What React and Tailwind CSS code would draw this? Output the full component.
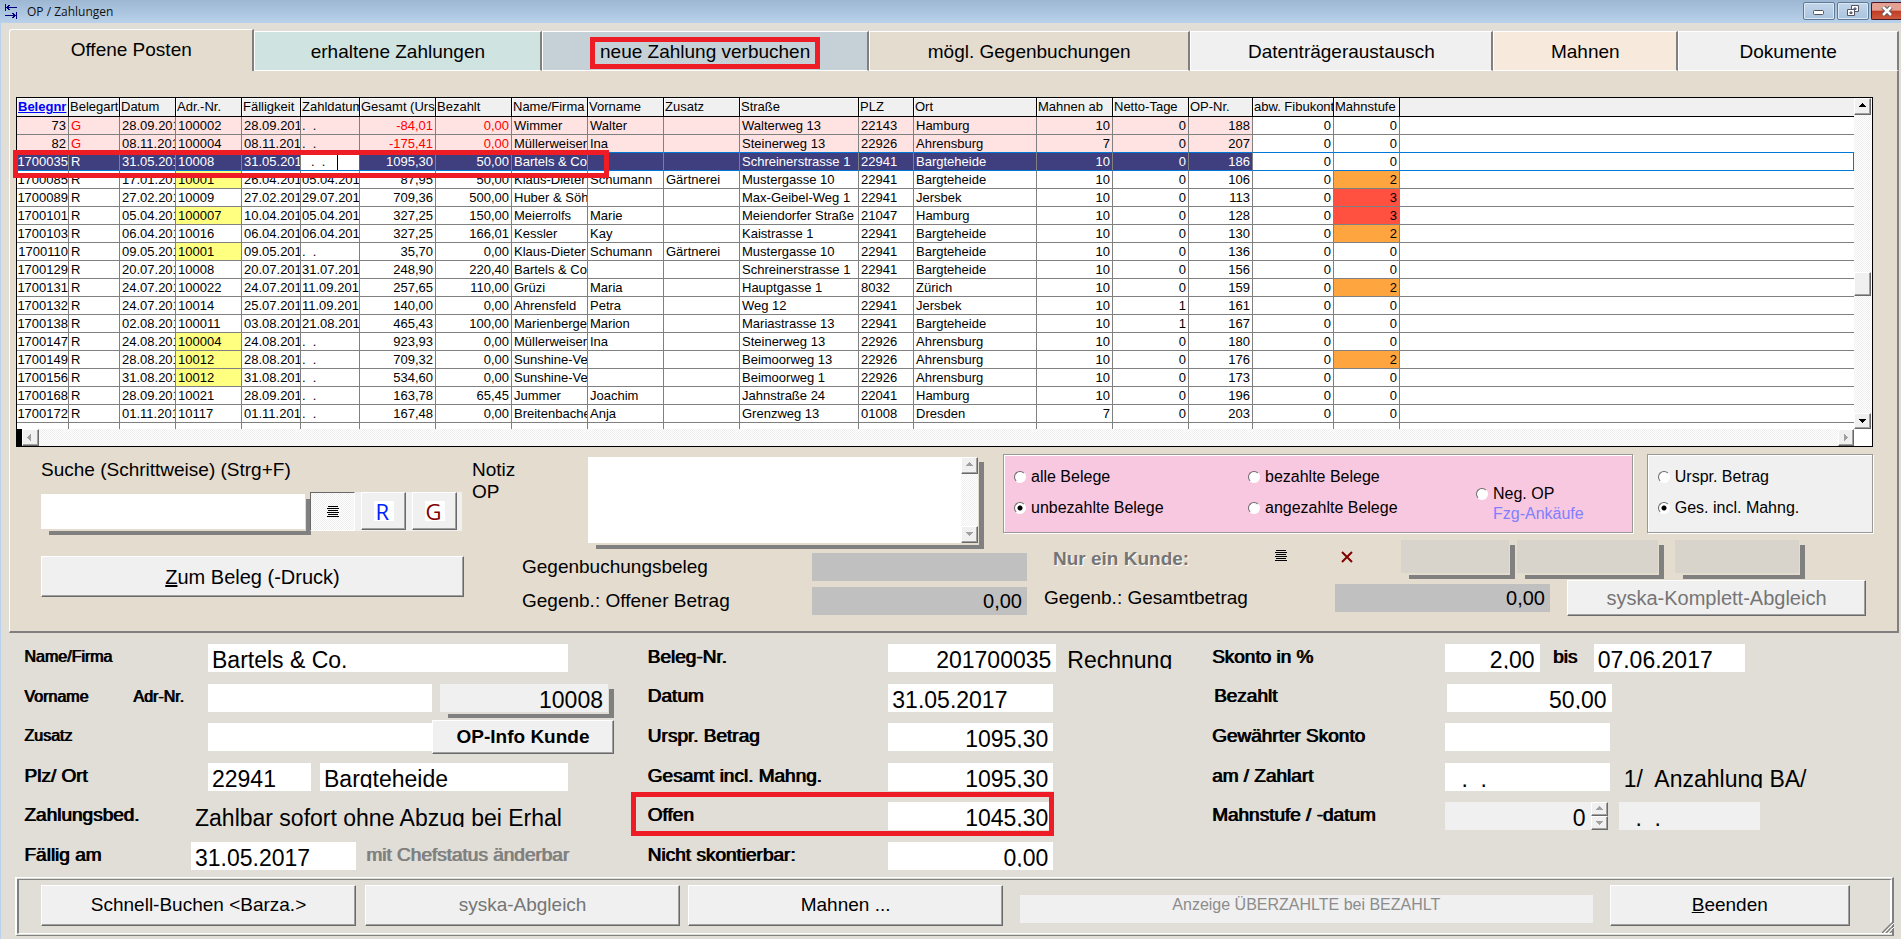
import { useState } from 'react'
import clsx from 'clsx'

const SPALTEN = [
  { key: 'nr',     titel: 'Belegnr',        w: 'w-[52px]',  rechts: true },
  { key: 'art',    titel: 'Belegart',       w: 'w-[51px]' },
  { key: 'datum',  titel: 'Datum',          w: 'w-[56px]' },
  { key: 'adr',    titel: 'Adr.-Nr.',       w: 'w-[66px]' },
  { key: 'faellig', titel: 'Fälligkeit',    w: 'w-[59px]' },
  { key: 'zahl',   titel: 'Zahldatum',      w: 'w-[59px]' },
  { key: 'gesamt', titel: 'Gesamt (Urspr.)', w: 'w-[76px]', rechts: true },
  { key: 'bez',    titel: 'Bezahlt',        w: 'w-[76px]',  rechts: true },
  { key: 'name',   titel: 'Name/Firma',     w: 'w-[76px]' },
  { key: 'vor',    titel: 'Vorname',        w: 'w-[76px]' },
  { key: 'zusatz', titel: 'Zusatz',         w: 'w-[76px]' },
  { key: 'str',    titel: 'Straße',         w: 'w-[119px]' },
  { key: 'plz',    titel: 'PLZ',            w: 'w-[55px]' },
  { key: 'ort',    titel: 'Ort',            w: 'w-[123px]' },
  { key: 'mahnAb', titel: 'Mahnen ab',      w: 'w-[76px]',  rechts: true },
  { key: 'netto',  titel: 'Netto-Tage',     w: 'w-[76px]',  rechts: true },
  { key: 'op',     titel: 'OP-Nr.',         w: 'w-[64px]',  rechts: true },
  { key: 'fibu',   titel: 'abw. Fibukonto', w: 'w-[81px]',  rechts: true },
  { key: 'stufe',  titel: 'Mahnstufe',      w: 'w-[66px]',  rechts: true },
]

const KEYS = SPALTEN.map(s => s.key)
const LEER = '.  .'

const POSTEN = [
  ['73', 'G', '28.09.2017', '100002', '28.09.2017', LEER, '-84,01', '0,00', 'Wimmer', 'Walter', '', 'Walterweg 13', '22143', 'Hamburg', '10', '0', '188', '0', '0'],
  ['82', 'G', '08.11.2017', '100004', '08.11.2017', LEER, '-175,41', '0,00', 'Müllerweiser', 'Ina', '', 'Steinerweg 13', '22926', 'Ahrensburg', '7', '0', '207', '0', '0'],
  ['1700035', 'R', '31.05.2017', '10008', '31.05.2017', LEER, '1095,30', '50,00', 'Bartels & Co.', '', '', 'Schreinerstrasse 1', '22941', 'Bargteheide', '10', '0', '186', '0', '0'],
  ['1700085', 'R', '17.01.2017', '10001', '26.04.2017', '05.04.2017', '87,95', '50,00', 'Klaus-Dieter', 'Schumann', 'Gärtnerei', 'Mustergasse 10', '22941', 'Bargteheide', '10', '0', '106', '0', '2'],
  ['1700089', 'R', '27.02.2017', '10009', '27.02.2017', '29.07.2017', '709,36', '500,00', 'Huber & Söhne', '', '', 'Max-Geibel-Weg 1', '22941', 'Jersbek', '10', '0', '113', '0', '3'],
  ['1700101', 'R', '05.04.2017', '100007', '10.04.2017', '05.04.2017', '327,25', '150,00', 'Meierrolfs', 'Marie', '', 'Meiendorfer Straße', '21047', 'Hamburg', '10', '0', '128', '0', '3'],
  ['1700103', 'R', '06.04.2017', '10016', '06.04.2017', '06.04.2017', '327,25', '166,01', 'Kessler', 'Kay', '', 'Kaistrasse 1', '22941', 'Bargteheide', '10', '0', '130', '0', '2'],
  ['1700110', 'R', '09.05.2017', '10001', '09.05.2017', LEER, '35,70', '0,00', 'Klaus-Dieter', 'Schumann', 'Gärtnerei', 'Mustergasse 10', '22941', 'Bargteheide', '10', '0', '136', '0', '0'],
  ['1700129', 'R', '20.07.2017', '10008', '20.07.2017', '31.07.2017', '248,90', '220,40', 'Bartels & Co.', '', '', 'Schreinerstrasse 1', '22941', 'Bargteheide', '10', '0', '156', '0', '0'],
  ['1700131', 'R', '24.07.2017', '100022', '24.07.2017', '11.09.2017', '257,65', '110,00', 'Grüzi', 'Maria', '', 'Hauptgasse 1', '8032', 'Zürich', '10', '0', '159', '0', '2'],
  ['1700132', 'R', '24.07.2017', '10014', '25.07.2017', '11.09.2017', '140,00', '0,00', 'Ahrensfeld', 'Petra', '', 'Weg 12', '22941', 'Jersbek', '10', '1', '161', '0', '0'],
  ['1700138', 'R', '02.08.2017', '100011', '03.08.2017', '21.08.2017', '465,43', '100,00', 'Marienberger', 'Marion', '', 'Mariastrasse 13', '22941', 'Bargteheide', '10', '1', '167', '0', '0'],
  ['1700147', 'R', '24.08.2017', '100004', '24.08.2017', LEER, '923,93', '0,00', 'Müllerweiser', 'Ina', '', 'Steinerweg 13', '22926', 'Ahrensburg', '10', '0', '180', '0', '0'],
  ['1700149', 'R', '28.08.2017', '10012', '28.08.2017', LEER, '709,32', '0,00', 'Sunshine-Verleih', '', '', 'Beimoorweg 13', '22926', 'Ahrensburg', '10', '0', '176', '0', '2'],
  ['1700156', 'R', '31.08.2017', '10012', '31.08.2017', LEER, '534,60', '0,00', 'Sunshine-Verleih', '', '', 'Beimoorweg 1', '22926', 'Ahrensburg', '10', '0', '173', '0', '0'],
  ['1700168', 'R', '28.09.2017', '10021', '28.09.2017', LEER, '163,78', '65,45', 'Jummer', 'Joachim', '', 'Jahnstraße 24', '22041', 'Hamburg', '10', '0', '196', '0', '0'],
  ['1700172', 'R', '01.11.2017', '10117', '01.11.2017', LEER, '167,48', '0,00', 'Breitenbacher', 'Anja', '', 'Grenzweg 13', '01008', 'Dresden', '7', '0', '203', '0', '0'],
].map(z => Object.fromEntries(z.map((v, i) => [KEYS[i], v])))

const GELB = ['1700085', '1700101', '1700110', '1700147', '1700149', '1700156']
const AKTIV = '1700035'

const RASTER = '[background-image:repeating-conic-gradient(#fff_0_25%,#efefef_0_50%)] [background-size:2px_2px]'
const ERHABEN = 'bg-[#f0f0f0] border border-t-white border-l-white border-r-[#696969] border-b-[#696969] shadow-[inset_-1px_-1px_0_#a0a0a0]'

/* ---------- kleine Bausteine ---------- */

function Knopf({ className, children, ...rest }) {
  return (
    <button type="button" className={clsx(ERHABEN, 'whitespace-nowrap text-center', className)} {...rest}>
      {children}
    </button>
  )
}

function Pfeil({ richtung, grau }) {
  const d = {
    hoch:   'M4 0h1v1h1v1h1v1h1v1H1V3h1V2h1V1h1z',
    runter: 'M1 1h7v1H7v1H6v1H5v1H4V4H3V3H2V2H1z',
    links:  'M5 0v7H4V6H3V5H2V4H1V3h1V2h1V1h1V0z',
    rechts: 'M2 0h1v1h1v1h1v1h1v1H5v1H4v1H3v1H2z',
  }[richtung]
  return (
    <svg width="9" height="7" viewBox="0 0 9 7" className={grau ? 'fill-[#a0a0a0]' : 'fill-black'} aria-hidden="true">
      <path d={d} />
    </svg>
  )
}

function RollKnopf({ richtung, grau, className, name }) {
  return (
    <button type="button" aria-label={name} className={clsx(ERHABEN, 'flex shrink-0 items-center justify-center', className)}>
      <Pfeil richtung={richtung} grau={grau} />
    </button>
  )
}

// Feld mit versetztem grauem Schlagschatten
function Schatten({ className, children }) {
  return (
    <div className={clsx('grid shrink-0', className)}>
      <div className="[grid-area:1/1] mt-[5px] ml-2 border-r-[5px] border-b-4 border-[#808080]" />
      <div className="[grid-area:1/1] mr-[6px] mb-[6px] flex">{children}</div>
    </div>
  )
}

function Wert({ id, value, rechts, bg = 'bg-white', className }) {
  return (
    <div className={clsx('h-7 shrink-0 overflow-hidden pt-1 pb-[3px]', bg, className)}>
      <div className="h-[21px] overflow-hidden">
        <input
          id={id} defaultValue={value} aria-label={id}
          className={clsx('block h-[25px] w-full bg-transparent text-[23px] leading-[25px] outline-none', rechts ? 'pr-[5px] text-right' : 'pl-1')}
        />
      </div>
    </div>
  )
}

function Label({ id, className, klein, children }) {
  return (
    <label
      htmlFor={id}
      className={clsx('shrink-0 whitespace-nowrap pb-[2px] [text-shadow:1px_0_0_currentColor]', klein ? 'text-[16px]' : 'text-[19px]', className)}
    >
      {children}
    </label>
  )
}

function Zeile({ className, children }) {
  return <div className={clsx('flex h-7 items-center', className)}>{children}</div>
}

function Option({ gruppe, label, wert, onChange, className }) {
  return (
    <label className={clsx('flex items-center gap-[5px] text-[16px] leading-5 whitespace-nowrap', className)}>
      <input
        type="radio" name={gruppe} checked={wert === label} onChange={() => onChange(label)}
        className="h-3 w-3 shrink-0 appearance-none rounded-full border border-t-[#696969] border-r-white border-b-white border-l-[#696969] bg-white checked:[background-image:radial-gradient(circle,#000_2px,#fff_3px)]"
      />
      {label}
    </label>
  )
}

function ListenIcon() {
  return (
    <svg width="12" height="12" viewBox="0 0 12 12" aria-hidden="true">
      <path d="M1 .5h10M0 2.5h12M1 4.5h10M0 6.5h12M1 8.5h10M0 10.5h12" stroke="#000" strokeWidth="1" shapeRendering="crispEdges" />
    </svg>
  )
}

function Markierung({ className }) {
  return <div className={clsx('pointer-events-none absolute border-[5px] border-[#ee1c24]', className)} />
}

/* ---------- Titelleiste ---------- */

function Titelleiste() {
  const knopf = 'flex h-[18px] w-8 items-center justify-center rounded-[2px] border border-[#5f7894] shadow-[inset_0_0_0_1px_#dbe8f5]'
  return (
    <header className="flex h-[23px] shrink-0 items-center bg-linear-to-b from-[#9db7d3] to-[#b9d1ea] pl-[5px]">
      <svg width="13" height="15" viewBox="0 0 13 15" aria-hidden="true" fill="none" stroke="#00007f" shapeRendering="crispEdges">
        <path d="M.5 0v7M1 3.500h11M2.500 2v3M3.500 1v5M4.500 1v1M4.500 5v1" />
        <path d="M11.500 8v7M0 11.500h11M9.500 10v3M8.500 9v5M7.500 9v1M7.500 13v1" />
      </svg>
      <h1 className="ml-[9px] font-['Open_Sans',sans-serif] text-[12px] text-[#111]">OP / Zahlungen</h1>
      <div className="ml-auto flex h-full gap-[2px] pt-[2px]">
        <button type="button" aria-label="Minimieren" className={clsx(knopf, 'bg-linear-to-b from-[#c3d6ea] to-[#a9c3de]')}>
          <svg width="12" height="6" viewBox="0 0 12 6" className="mt-[3px]"><rect x=".5" y=".5" width="10" height="4" rx="1" fill="#fff" stroke="#555" /></svg>
        </button>
        <button type="button" aria-label="Wiederherstellen" className={clsx(knopf, 'bg-linear-to-b from-[#c3d6ea] to-[#a9c3de]')}>
          <svg width="13" height="12" viewBox="0 0 13 12" fill="#fff" stroke="#556">
            <path d="M4.500 .5h7v6h-7z" />
            <path d="M7 3h2v1.500H7z" fill="#9db7d3" />
            <path d="M.5 4.500h7v6h-7z" />
            <path d="M3 7h2v1.500H3z" fill="#9db7d3" />
          </svg>
        </button>
        <button type="button" aria-label="Schließen" className="flex h-[18px] w-[30px] items-center justify-center rounded-l-[2px] border border-r-0 border-[#4a1420] bg-linear-to-b from-[#e5a094] from-45% via-[#c03a24] via-50% to-[#cc5a3c]">
          <svg width="12" height="10" viewBox="0 0 12 10">
            <path d="M2 1l8 8M10 1L2 9" stroke="#555" strokeWidth="4.500" />
            <path d="M2 1l8 8M10 1L2 9" stroke="#fff" strokeWidth="2.500" />
          </svg>
        </button>
      </div>
    </header>
  )
}

/* ---------- Register ---------- */

const REGISTER = [
  { titel: 'erhaltene Zahlungen',    cls: 'flex-[288] bg-[#cfe3e1]' },
  { titel: 'neue Zahlung verbuchen', cls: 'flex-[327] bg-[#c6d1d7]', rot: true },
  { titel: 'mögl. Gegenbuchungen',   cls: 'flex-[322] bg-[#e3dccf]' },
  { titel: 'Datenträgeraustausch',   cls: 'flex-[303] bg-[#f0f0f0]' },
  { titel: 'Mahnen',                 cls: 'flex-[184] bg-[#f7eadd]' },
  { titel: 'Dokumente',              cls: 'flex-[220] bg-[#f0f0f0]' },
]

function Register() {
  return (
    <nav className="flex h-[42px] text-[19px]" role="tablist">
      <button type="button" role="tab" aria-selected="true"
        className="flex-[245] rounded-tl-[3px] border-t border-r-2 border-l border-t-white border-r-[#808080] border-l-white bg-[#e3dccf]">
        Offene Posten
      </button>
      {REGISTER.map(r => (
        <button key={r.titel} type="button" role="tab" aria-selected="false"
          className={clsx('relative mt-[2px] border-t border-r-2 border-b border-l border-t-white border-r-[#808080] border-b-white border-l-white pt-[3px]', r.cls)}>
          {r.titel}
          {r.rot && <Markierung className="inset-x-[47px] top-[5px] h-8" />}
        </button>
      ))}
    </nav>
  )
}

/* ---------- Tabelle ---------- */

function zellKlasse(p, s, i) {
  const farbig = i < 17
  const aktiv = p.nr === AKTIV
  return clsx(
    'h-[18px] overflow-hidden border-r border-b border-r-[#808080] py-0 leading-[17px] whitespace-pre',
    aktiv || p.nr === '82' ? 'border-b-[#0078d7]' : 'border-b-[#808080]',
    s.key === 'nr' ? 'px-0' : s.key === 'zahl' ? 'pr-0 pl-px' : 'px-[2px]',
    s.rechts && 'text-right',
    p.nr === '73' || p.nr === '82' ? s.key === 'nr' && 'pr-[2px]' : '',
    farbig && p.art === 'G' && 'bg-[#ffe2e2]',
    farbig && aktiv && 'bg-[#3f3f7f] text-white',
    p.art === 'G' && ['art', 'gesamt', 'bez'].includes(s.key) && 'text-[#ff0000]',
    s.key === 'adr' && GELB.includes(p.nr) && 'bg-[#ffff80]',
    s.key === 'stufe' && p.stufe === '2' && 'bg-[#ffa540]',
    s.key === 'stufe' && p.stufe === '3' && 'bg-[#ff5040]',
  )
}

function Tabelle() {
  return (
    <div className="relative mr-6 ml-[6px] border border-black bg-white">
      <div className="flex">
        <div className="h-[331px] min-w-0 flex-1 overflow-hidden">
          <table className="w-full table-fixed border-separate border-spacing-0 text-[13px]">
            <thead>
              <tr>
                {SPALTEN.map(s => (
                  <th key={s.key}
                    className={clsx('h-[19px] overflow-hidden border-r border-b border-black bg-[#f0f0f0] p-0 pl-px text-left leading-[18px] whitespace-nowrap shadow-[inset_1px_1px_0_#fff]', s.w,
                      s.key === 'nr' ? 'font-bold text-[#0000ff] underline' : 'font-normal')}>
                    {s.titel}
                  </th>
                ))}
                <th className="border-b border-black bg-[#f0f0f0] p-0" />
              </tr>
            </thead>
            <tbody>
              {POSTEN.map(p => (
                <tr key={p.nr}>
                  {SPALTEN.map((s, i) => p.nr === AKTIV && s.key === 'zahl'
                    ? (
                      <td key={s.key} className="h-[18px] overflow-hidden border-r border-b border-[#0078d7] bg-white p-0">
                        <input aria-label="Zahldatum" defaultValue={LEER} className="block h-4 w-[37px] border-r border-black pl-[10px] text-[13px] leading-4 outline-none" />
                      </td>
                    )
                    : <td key={s.key} className={zellKlasse(p, s, i)}>{p[s.key]}</td>)}
                  <td className={clsx('border-b p-0', p.nr === AKTIV ? 'border-r border-[#0078d7]' : p.nr === '82' ? 'border-[#0078d7]' : 'border-[#808080]')} />
                </tr>
              ))}
              <tr>
                {SPALTEN.map(s => <td key={s.key} className="h-[18px] border-r border-[#808080] p-0" />)}
                <td className="p-0" />
              </tr>
            </tbody>
          </table>
        </div>
        <div className={clsx('mr-px flex w-[17px] flex-col', RASTER)}>
          <RollKnopf richtung="hoch" name="Nach oben" className="h-[17px]" />
          <div className="flex-[157]" />
          <div className={clsx('h-6', ERHABEN)} />
          <div className="flex-[117]" />
          <RollKnopf richtung="runter" name="Nach unten" className="h-4" />
        </div>
      </div>
      <div className="mr-[18px] flex h-[17px]">
        <div className="w-[5px] bg-black" />
        <RollKnopf richtung="links" grau name="Nach links" className="w-[17px]" />
        <div className={clsx('flex-1', RASTER)} />
        <RollKnopf richtung="rechts" grau name="Nach rechts" className="w-4" />
      </div>
      <Markierung className="top-[52px] -left-1 h-7 w-[596px]" />
    </div>
  )
}

/* ---------- Bereich unter der Tabelle ---------- */

function Suche() {
  return (
    <div className="w-[423px] shrink-0 pt-[5px]">
      <label htmlFor="suche" className="block text-[19px] leading-[22px]">Suche (Schrittweise) (Strg+F)</label>
      <div className="mt-[11px] flex items-start">
        <Schatten className="mt-[2px] h-[41px] w-[270px]">
          <input id="suche" className="w-full bg-white px-1 text-[19px] outline-none" />
        </Schatten>
        <div className="-ml-px flex h-[39px] w-[152px] gap-[6px] bg-[#f0f0f0]">
          <button type="button" aria-label="Liste" className={clsx('flex w-[45px] items-center justify-center border border-t-[#696969] border-r-white border-b-white border-l-[#696969]', RASTER)}>
            <ListenIcon />
          </button>
          <Knopf className="mb-px flex w-[45px] items-center justify-center">
            <span className="w-5 bg-white pl-[2px] text-left font-['Open_Sans',sans-serif] text-[22px] leading-5 text-[#0020ff]">R</span>
          </Knopf>
          <Knopf className="mb-px flex w-[45px] items-center justify-center">
            <span className="w-5 bg-white pl-px text-left font-['Open_Sans',sans-serif] text-[22px] leading-5 text-[#800000]">G</span>
          </Knopf>
        </div>
      </div>
      <Knopf className="mt-[21px] h-[41px] w-full text-[20px]"><u>Z</u>um Beleg (-Druck)</Knopf>
    </div>
  )
}

function Filter() {
  const [belege, setBelege] = useState('unbezahlte Belege')
  const [betrag, setBetrag] = useState('Ges. incl. Mahng.')
  const rahmen = 'h-[79px] border border-[#999] shadow-[inset_1px_1px_0_#fff,1px_1px_0_#fff]'
  return (
    <>
      <fieldset className={clsx('ml-[19px] flex flex-[617] bg-[#f8c8e0] pl-[10px]', rahmen)}>
        <div className="flex w-[234px] flex-col gap-[11px] pt-3">
          <Option gruppe="belege" label="alle Belege" wert={belege} onChange={setBelege} />
          <Option gruppe="belege" label="unbezahlte Belege" wert={belege} onChange={setBelege} />
        </div>
        <div className="flex w-[228px] flex-col gap-[11px] pt-3">
          <Option gruppe="belege" label="bezahlte Belege" wert={belege} onChange={setBelege} />
          <Option gruppe="belege" label="angezahlte Belege" wert={belege} onChange={setBelege} />
        </div>
        <div className="pt-[29px]">
          <Option gruppe="belege" label="Neg. OP" wert={belege} onChange={setBelege} />
          <p className="pl-[17px] text-[16px] leading-5 text-[#8080ff]">Fzg-Ankäufe</p>
        </div>
      </fieldset>
      <fieldset className={clsx('ml-[14px] flex flex-[214] flex-col gap-[11px] bg-[#f0f0f0] pt-3 pl-[10px]', rahmen)}>
        <Option gruppe="betrag" label="Urspr. Betrag" wert={betrag} onChange={setBetrag} />
        <Option gruppe="betrag" label="Ges. incl. Mahng." wert={betrag} onChange={setBetrag} />
      </fieldset>
    </>
  )
}

function Grau({ id, value = '' }) {
  return <input id={id} defaultValue={value} className="h-7 w-[215px] shrink-0 bg-[#c0c0c0] pr-[5px] text-right text-[20px] outline-none" />
}

function Gegenbuchung() {
  return (
    <div className="flex items-start pl-[50px] text-[19px]">
      <div className="mt-1 flex w-[505px] shrink-0 flex-col gap-[5px]">
        <div className="flex items-center justify-between"><label htmlFor="gb">Gegenbuchungsbeleg</label><Grau id="gb" /></div>
        <div className="flex items-center justify-between"><label htmlFor="gbo">Gegenb.: Offener Betrag</label><Grau id="gbo" value="0,00" /></div>
      </div>
      <div className="-mt-[9px] ml-[17px] min-w-0 flex-1">
        <div className="flex h-10 items-start">
          <span className="w-[222px] pt-[5px] pl-[9px] font-bold text-[#757575] [text-shadow:1px_1px_0_#fff]">Nur ein Kunde:</span>
          <button type="button" aria-label="Kundenliste" className="mt-[10px] ml-[9px]"><ListenIcon /></button>
          <button type="button" aria-label="Kunde entfernen" className="mt-[11px] ml-[54px]">
            <svg width="12" height="12" viewBox="0 0 12 12"><path d="M1 1l10 10M11 1L1 11" stroke="#800000" strokeWidth="2" /></svg>
          </button>
          <Schatten className="ml-12 h-[39px] w-[114px]"><input aria-label="Kunden-Nr." className="w-full bg-[#d8d4cc]" /></Schatten>
          <Schatten className="ml-[2px] h-[39px] w-[147px]"><input aria-label="Kunde Name" className="w-full bg-[#d8d4cc]" /></Schatten>
          <Schatten className="ml-[11px] h-[39px] w-[130px]"><input aria-label="Kunde Ort" className="w-full bg-[#d8d4cc]" /></Schatten>
        </div>
        <div className="flex h-9 items-center">
          <label htmlFor="gbg" className="w-[291px] shrink-0 whitespace-nowrap">Gegenb.: Gesamtbetrag</label>
          <Grau id="gbg" value="0,00" />
          <Knopf className="mr-[7px] ml-[17px] h-9 flex-1 text-[20px] text-[#757575]">syska-Komplett-Abgleich</Knopf>
        </div>
      </div>
    </div>
  )
}

function OffenePosten() {
  return (
    <section className="border-r-2 border-b-2 border-l border-r-[#808080] border-b-[#808080] border-l-white bg-[#e3dccf] pt-[26px] pb-[15px]">
      <Tabelle />
      <div className="mt-[7px] mr-6 flex pl-[31px]">
        <Suche />
        <div className="ml-2 min-w-0 flex-1">
          <div className="flex items-start">
            <label htmlFor="notiz" className="w-[116px] pt-[5px] text-[19px] leading-[22px]">Notiz<br />OP</label>
            <Schatten className="mt-[3px] h-[92px] w-[396px]">
              <textarea id="notiz" className="min-w-0 flex-1 resize-none bg-white outline-none" />
              <div className={clsx('flex w-[17px] flex-col justify-between', RASTER)}>
                <RollKnopf richtung="hoch" grau name="Notiz nach oben" className="h-[17px]" />
                <RollKnopf richtung="runter" grau name="Notiz nach unten" className="h-[17px]" />
              </div>
            </Schatten>
            <Filter />
          </div>
          <Gegenbuchung />
        </div>
      </div>
    </section>
  )
}

/* ---------- Detailformular ---------- */

function Formular() {
  return (
    <form className="grid flex-1 grid-cols-[623fr_564fr_689fr] pt-[11px] pb-[7px] pl-[23px]">
      <div className="flex flex-col justify-between">
        <Zeile><Label id="Name" klein className="w-[184px]">Name/Firma</Label><Wert id="Name" value="Bartels & Co." className="w-[360px]" /></Zeile>
        <Zeile className="items-start">
          <Label id="Vorname" klein className="w-[109px] leading-[26px]">Vorname</Label>
          <Label id="AdrNr" klein className="w-[75px] leading-[26px]">Adr-Nr.</Label>
          <Wert id="Vorname" value="" className="w-[224px]" />
          <Schatten className="ml-2 w-[174px]"><Wert id="AdrNr" value="10008" rechts bg="bg-[#f0f0f0]" className="w-full" /></Schatten>
        </Zeile>
        <Zeile>
          <Label id="Zusatz" klein className="w-[184px]">Zusatz</Label>
          <Wert id="Zusatz" value="" className="w-[224px]" />
          <Knopf className="h-[34px] w-[182px] shrink-0 text-[19px] font-bold">OP-Info Kunde</Knopf>
        </Zeile>
        <Zeile>
          <Label id="PLZ" className="w-[184px]">Plz/ Ort</Label>
          <Wert id="PLZ" value="22941" className="w-[103px]" />
          <Wert id="Ort" value="Bargteheide" className="ml-[9px] w-[248px]" />
        </Zeile>
        <Zeile><Label id="Zahlungsbed" className="w-[167px]">Zahlungsbed.</Label><Wert id="Zahlungsbed" value="Zahlbar sofort ohne Abzug bei Erhal" bg="" className="w-[376px]" /></Zeile>
        <Zeile>
          <Label id="Faellig" className="w-[167px]">Fällig am</Label>
          <Wert id="Faellig" value="31.05.2017" className="w-[165px]" />
          <Label className="ml-[10px] text-[#808080]">mit Chefstatus änderbar</Label>
        </Zeile>
      </div>

      <div className="flex flex-col justify-between">
        <Zeile>
          <Label id="BelegNr" className="w-[241px]">Beleg-Nr.</Label>
          <Wert id="BelegNr" value="201700035" rechts className="w-[168px]" />
          <Wert id="Belegart" value="Rechnung" bg="" className="ml-[7px] w-[114px]" />
        </Zeile>
        <Zeile><Label id="Datum" className="w-[241px]">Datum</Label><Wert id="Datum" value="31.05.2017" className="w-[165px]" /></Zeile>
        <Zeile><Label id="Betrag" className="w-[241px]">Urspr. Betrag</Label><Wert id="Betrag" value="1095,30" rechts className="w-[165px]" /></Zeile>
        <Zeile><Label id="Gesamt" className="w-[241px]">Gesamt incl. Mahng.</Label><Wert id="Gesamt" value="1095,30" rechts className="w-[165px]" /></Zeile>
        <Zeile className="relative">
          <Label id="Offen" className="w-[241px]">Offen</Label><Wert id="Offen" value="1045,30" rechts className="w-[165px]" />
          <Markierung className="-top-[10px] -left-4 h-11 w-[423px]" />
        </Zeile>
        <Zeile><Label id="NichtSk" className="w-[241px]">Nicht skontierbar:</Label><Wert id="NichtSk" value="0,00" rechts className="w-[165px]" /></Zeile>
      </div>

      <div className="flex flex-col justify-between">
        <Zeile>
          <Label id="Skonto" className="w-[233px]">Skonto in %</Label>
          <Wert id="Skonto" value="2,00" rechts className="w-[95px]" />
          <Label id="SkontoBis" className="ml-[13px] w-[41px]">bis</Label>
          <Wert id="SkontoBis" value="07.06.2017" className="w-[151px]" />
        </Zeile>
        <Zeile className="pl-[2px]"><Label id="Bezahlt" className="w-[233px]">Bezahlt</Label><Wert id="Bezahlt" value="50,00" rechts className="w-[165px]" /></Zeile>
        <Zeile><Label id="GewSkonto" className="w-[233px]">Gewährter Skonto</Label><Wert id="GewSkonto" value="" className="w-[165px]" /></Zeile>
        <Zeile>
          <Label id="Zahlart" className="w-[233px]">am / Zahlart</Label>
          <Wert id="Zahlart" value="  .  ." className="w-[165px]" />
          <Wert id="ZahlartText" value="1/  Anzahlung BA/" bg="" className="ml-[10px] w-[200px]" />
        </Zeile>
        <Zeile>
          <Label id="Mahnstufe" className="w-[233px]">Mahnstufe / -datum</Label>
          <Wert id="Mahnstufe" value="0" rechts bg="bg-[#f0f0f0]" className="w-[146px]" />
          <div className="flex h-7 w-[17px] flex-col">
            <RollKnopf richtung="hoch" grau name="Mahnstufe erhöhen" className="h-[14px]" />
            <RollKnopf richtung="runter" grau name="Mahnstufe senken" className="h-[14px]" />
          </div>
          <Wert id="Mahndatum" value="  .  ." bg="bg-[#f0f0f0]" className="ml-[11px] w-[141px]" />
        </Zeile>
        <Zeile />
      </div>
    </form>
  )
}

/* ---------- Fußleiste ---------- */

function Fussleiste() {
  return (
    <footer className="mr-[7px] mb-[3px] ml-[14px] border-t border-r-2 border-b border-l-2 border-t-white border-r-[#808080] border-b-[#808080] border-l-white">
      <div className="mt-px mb-px flex h-[55px] items-start border-t border-r-2 border-b border-l-2 border-t-[#808080] border-r-white border-b-white border-l-[#808080] pt-[5px] pl-[22px] text-[19px]">
        <Knopf className="h-[41px] flex-[315]">Schnell-Buchen &lt;Barza.&gt;</Knopf>
        <Knopf className="ml-[9px] h-[41px] flex-[315] text-[#757575]">syska-Abgleich</Knopf>
        <Knopf className="ml-2 h-[41px] flex-[315]">Mahnen ...</Knopf>
        <div className="mt-[10px] ml-[17px] h-7 flex-[576] bg-[#f0f0f0] text-center text-[16px] leading-[19px] text-[#8c8c8c]">Anzeige ÜBERZAHLTE bei BEZAHLT</div>
        <Knopf className="ml-[17px] h-[41px] flex-[240]"><u>B</u>eenden</Knopf>
        <svg width="12" height="12" viewBox="0 0 12 12" className="-mr-1 ml-8 shrink-0 self-end" aria-hidden="true">
          <path d="M0 12L12 0M4 12l8-8M8 12l4-4" stroke="#808080" strokeWidth="1.500" />
          <path d="M2 12L12 2M6 12l6-6" stroke="#fff" />
        </svg>
      </div>
    </footer>
  )
}

export default function App() {
  return (
    <div className="flex min-h-screen flex-col bg-[#e1ded7] font-['Liberation_Sans',Arial,sans-serif] text-black">
      <Titelleiste />
      <main className="flex flex-1 flex-col border-l border-[#b9d1ea]">
        <div className="mt-[6px] mr-[2px] ml-2">
          <Register />
          <OffenePosten />
        </div>
        <Formular />
        <Fussleiste />
      </main>
    </div>
  )
}
